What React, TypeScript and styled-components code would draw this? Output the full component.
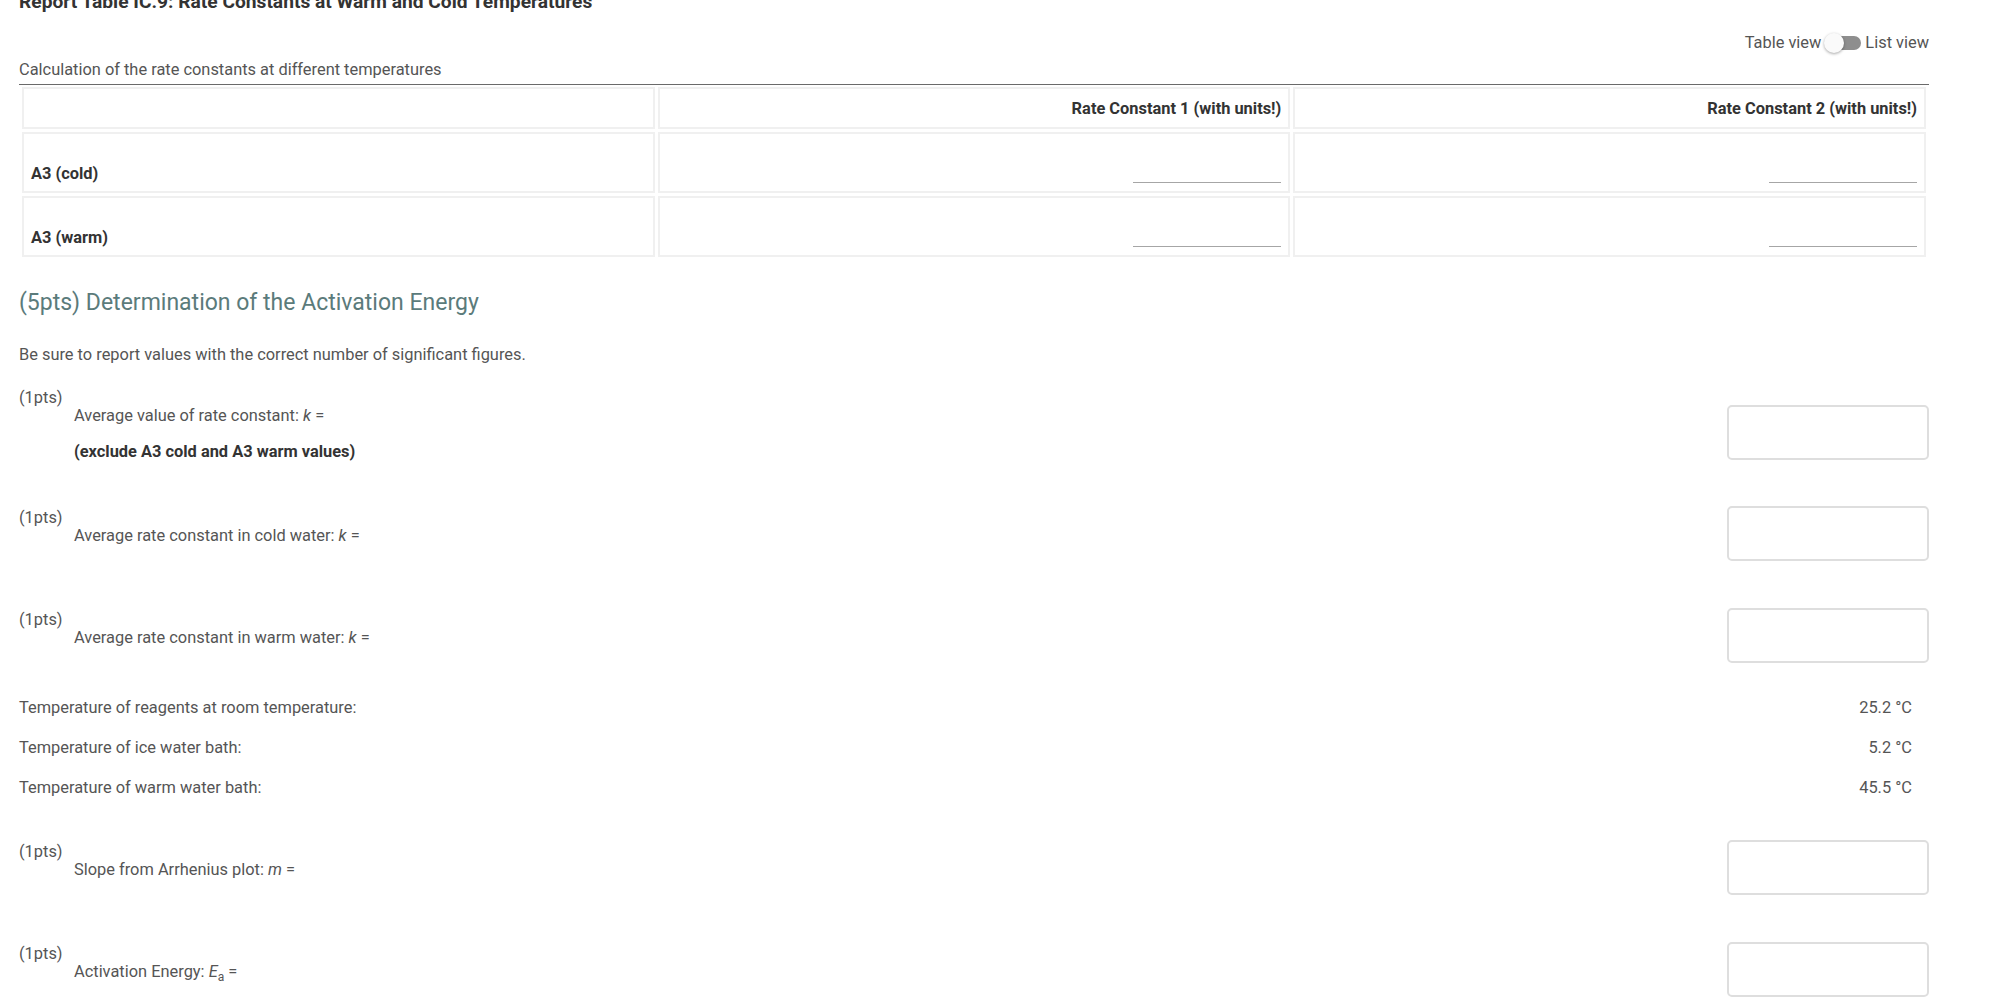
import React from 'react';
import styled, { createGlobalStyle } from 'styled-components';

const GlobalStyle = createGlobalStyle`
  html, body {
    margin: 0;
    padding: 0;
    background: #ffffff;
  }

  body {
    font-family: Roboto, "Liberation Sans", Arial, sans-serif;
    font-size: 16.4px;
    color: #555555;
    overflow: hidden;
  }
`;

const Page = styled.div`
  height: 1002px;
  overflow: hidden;
  padding: 0 66px 0 19px;
  box-sizing: border-box;
`;

const ReportTitle = styled.h3`
  margin: -9px 0 0;
  font-size: 19.2px;
  line-height: 22px;
  font-weight: 700;
  color: #333333;
  white-space: nowrap;
`;

const ViewToggle = styled.div`
  display: flex;
  justify-content: flex-end;
  align-items: center;
  gap: 4px;
  height: 24px;
  margin-top: 18px;
  line-height: 24px;
  color: #555555;
`;

const SwitchTrack = styled.span`
  position: relative;
  display: inline-block;
  width: 34px;
  height: 14px;
  margin-left: 2px;
  border-radius: 7px;
  background: #8e8e8e;
`;

const SwitchThumb = styled.span`
  position: absolute;
  left: -3px;
  top: -3px;
  width: 20px;
  height: 20px;
  border-radius: 50%;
  background: #fafafa;
  box-shadow: 0 1px 3px rgba(0, 0, 0, 0.35);
`;

const Caption = styled.div`
  margin-top: 6px;
  padding-bottom: 5px;
  line-height: 18px;
  border-bottom: 1px solid #6a6a6a;
`;

const RateTable = styled.table`
  width: 100%;
  border-collapse: separate;
  border-spacing: 3px 3px;
  margin-top: -1px;
`;

const Cell = styled.td<{ $head?: boolean; $align?: 'left' | 'right' }>`
  box-sizing: border-box;
  width: 33.33%;
  height: ${(p) => (p.$head ? '42px' : '61px')};
  padding: ${(p) => (p.$head ? '2px 7px 0' : '0 7px 8px')};
  border: 2px solid #f0f0f0;
  text-align: ${(p) => p.$align ?? 'left'};
  vertical-align: ${(p) => (p.$head ? 'middle' : 'bottom')};
  font-size: 16.4px;
  line-height: 18px;
  font-weight: 700;
  color: #333333;
`;

const BlankInput = styled.input`
  display: inline-block;
  width: 148px;
  height: 24px;
  padding: 0;
  border: none;
  border-bottom: 1px solid #a6a6a6;
  background: transparent;
  vertical-align: bottom;
  outline: none;
`;

const SectionHeading = styled.h2`
  margin: 29px 0 0;
  font-size: 23px;
  line-height: 28px;
  font-weight: 400;
  color: #5b7b7b;
`;

const Instructions = styled.p`
  margin: 29px 0 0;
  line-height: 18px;
`;

const QuestionBlock = styled.div<{ $gap: number }>`
  display: flex;
  align-items: center;
  justify-content: space-between;
  margin-top: ${(p) => p.$gap}px;
`;

const Points = styled.div`
  line-height: 18px;
  color: #555555;
`;

const Prompt = styled.div`
  margin-left: 55px;
  line-height: 18px;
  color: #555555;

  i {
    font-style: italic;
  }

  sub {
    font-size: 12px;
    line-height: 0;
    font-style: normal;
  }
`;

const Note = styled.div`
  margin: 18px 0 0 55px;
  line-height: 18px;
  font-weight: 700;
  color: #333333;
`;

const AnswerBox = styled.input`
  box-sizing: border-box;
  width: 202px;
  height: 55px;
  margin-top: 14px;
  border: 2px solid #dedede;
  border-radius: 5px;
  background: #ffffff;
  outline: none;
`;

const TempList = styled.div`
  display: flex;
  flex-direction: column;
  gap: 22px;
  margin-top: 36px;
`;

const TempRow = styled.div`
  display: flex;
  justify-content: space-between;
  line-height: 18px;
  padding-right: 17px;
`;

type Question = {
  gap: number;
  label: React.ReactNode;
  note?: string;
};

const Row: React.FC<Question> = ({ gap, label, note }) => (
  <QuestionBlock $gap={gap}>
    <div>
      <Points>(1pts)</Points>
      <Prompt>{label}</Prompt>
      {note && <Note>{note}</Note>}
    </div>
    <AnswerBox type="text" />
  </QuestionBlock>
);

const temps = [
  ['Temperature of reagents at room temperature:', '25.2 °C'],
  ['Temperature of ice water bath:', '5.2 °C'],
  ['Temperature of warm water bath:', '45.5 °C'],
];

const App: React.FC = () => {
  return (
    <>
      <GlobalStyle />
      <Page>
        <ReportTitle>Report Table IC.9: Rate Constants at Warm and Cold Temperatures</ReportTitle>

        <ViewToggle>
          <span>Table view</span>
          <SwitchTrack>
            <SwitchThumb />
          </SwitchTrack>
          <span>List view</span>
        </ViewToggle>

        <Caption>Calculation of the rate constants at different temperatures</Caption>
        <RateTable>
          <tbody>
            <tr>
              <Cell $head />
              <Cell $head $align="right">Rate Constant 1 (with units!)</Cell>
              <Cell $head $align="right">Rate Constant 2 (with units!)</Cell>
            </tr>
            {['A3 (cold)', 'A3 (warm)'].map((name) => (
              <tr key={name}>
                <Cell>{name}</Cell>
                <Cell $align="right">
                  <BlankInput type="text" />
                </Cell>
                <Cell $align="right">
                  <BlankInput type="text" />
                </Cell>
              </tr>
            ))}
          </tbody>
        </RateTable>

        <SectionHeading>(5pts) Determination of the Activation Energy</SectionHeading>
        <Instructions>Be sure to report values with the correct number of significant figures.</Instructions>

        <Row
          gap={25}
          label={<>Average value of rate constant: <i>k</i> =</>}
          note="(exclude A3 cold and A3 warm values)"
        />
        <Row gap={31} label={<>Average rate constant in cold water: <i>k</i> =</>} />
        <Row gap={33} label={<>Average rate constant in warm water: <i>k</i> =</>} />

        <TempList>
          {temps.map(([name, value]) => (
            <TempRow key={name}>
              <span>{name}</span>
              <span>{value}</span>
            </TempRow>
          ))}
        </TempList>

        <Row gap={29} label={<>Slope from Arrhenius plot: <i>m</i> =</>} />
        <Row gap={33} label={<>Activation Energy: <i>E</i><sub>a</sub> =</>} />
      </Page>
    </>
  );
};

export default App;
